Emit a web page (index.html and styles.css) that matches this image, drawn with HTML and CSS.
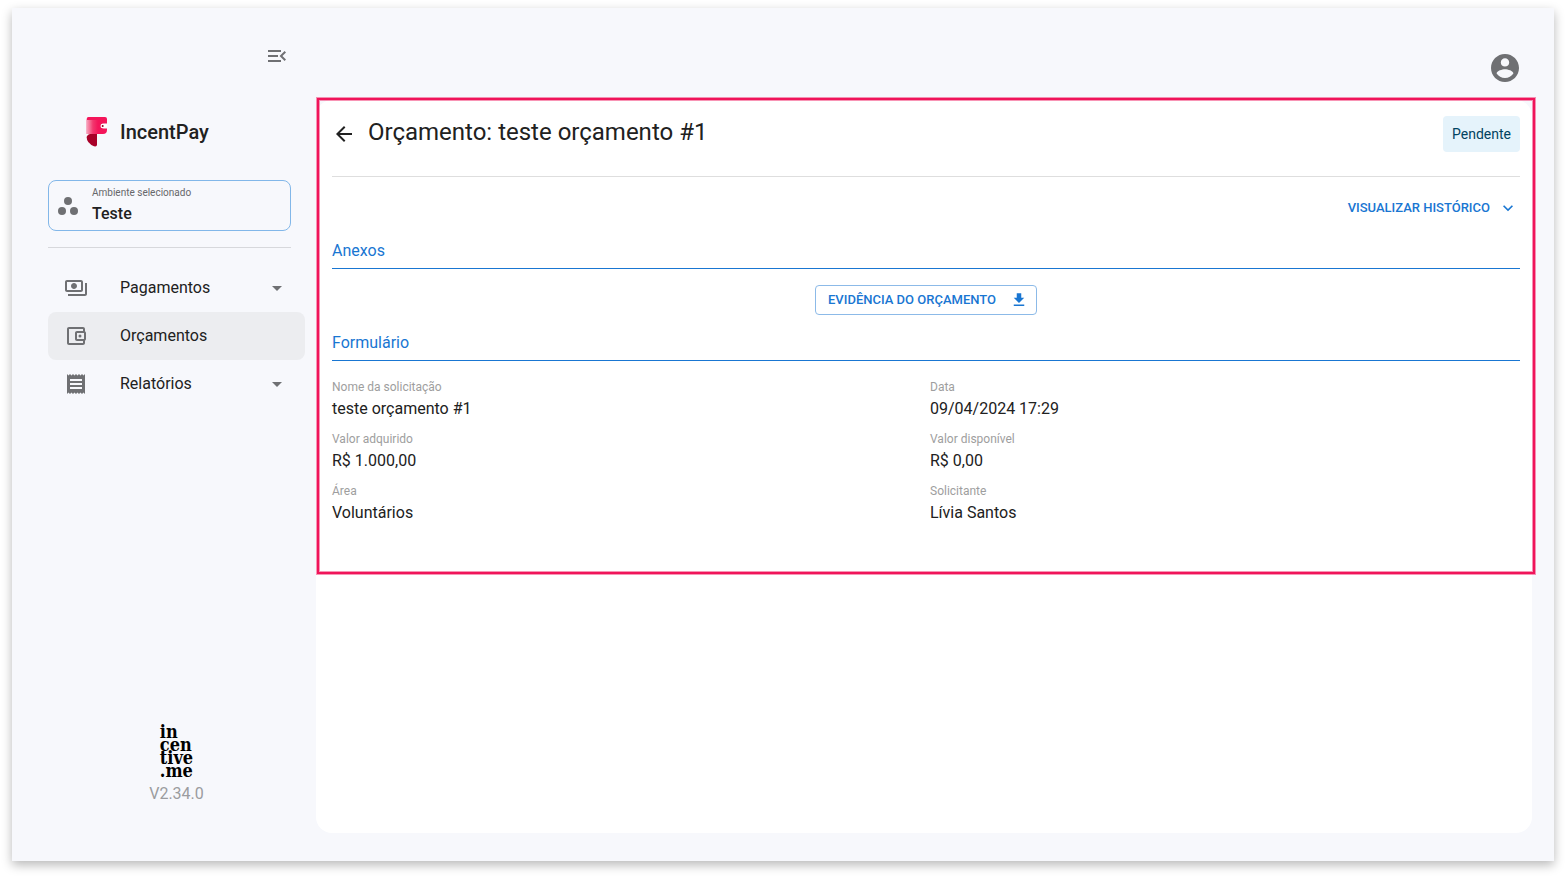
FILE: index.html
```html
<!DOCTYPE html>
<html lang="pt-BR">
<head>
<meta charset="utf-8">
<meta name="viewport" content="width=device-width, initial-scale=1">
<title>IncentPay - Orçamento</title>
<link rel="stylesheet" href="styles.css">
</head>
<body>
<div class="app">
  <aside class="sidebar">
    <button class="icon-button collapse" type="button" aria-label="Recolher menu">
      <svg class="icon" viewBox="0 0 24 24"><path d="M3 18h13v-2H3v2zm0-5h10v-2H3v2zm0-7v2h13V6H3zm18 9.590L17.420 12 21 8.410 19.590 7l-5 5 5 5L21 15.590z"/></svg>
    </button>
    <div class="brand">
      <svg class="brand-mark" viewBox="0 0 22 30">
        <defs>
          <linearGradient id="fold" x1="0" x2="1" y1="0" y2="0">
            <stop offset="0" stop-color="#f7a3bb"/>
            <stop offset="0.55" stop-color="#f2386e"/>
            <stop offset="1" stop-color="#f4155a"/>
          </linearGradient>
        </defs>
        <path fill="#f4155a" d="M2.500 0H19q2 0 2 2v4.500h-3.500a2.500 2.500 0 0 0 0 5H21V13q0 4-4 4H.7V2q0-2 1.800-2z"/>
        <path fill="url(#fold)" d="M.7 3H12v14H.7z"/>
        <path fill="#a80028" d="M4 17h7v10.500q0 2.500-3 1.800Q.7 26 .7 20.500.7 18 4 17z"/>
        <path fill="#fff" d="M21 7.500h-4v3h4z"/>
        <circle cx="16.700" cy="9" r="2.200" fill="#fff"/>
        <circle cx="16.700" cy="9" r="1" fill="#8c0020"/>
      </svg>
      <span class="brand-name">IncentPay</span>
    </div>
    <button class="environment" type="button">
      <svg class="icon" viewBox="0 0 24 24"><circle cx="6" cy="17" r="4"/><circle cx="12" cy="7" r="4"/><circle cx="18" cy="17" r="4"/></svg>
      <span class="environment-text">
        <span class="environment-label">Ambiente selecionado</span>
        <span class="environment-name">Teste</span>
      </span>
    </button>
    <hr class="divider">
    <nav class="nav">
      <button class="nav-item" type="button">
        <svg class="icon" viewBox="0 0 24 24"><path d="M19 14V6c0-1.100-.9-2-2-2H3c-1.100 0-2 .9-2 2v8c0 1.100.9 2 2 2h14c1.100 0 2-.9 2-2zm-2 0H3V6h14v8zm-7-7c-1.660 0-3 1.340-3 3s1.340 3 3 3 3-1.340 3-3-1.340-3-3-3zm13 0v11c0 1.100-.9 2-2 2H4v-2h17V7h2z"/></svg>
        <span class="nav-label">Pagamentos</span>
        <svg class="icon" viewBox="0 0 24 24"><path d="m7 10 5 5 5-5z"/></svg>
      </button>
      <a class="nav-item nav-item-active" href="#orcamentos" aria-current="page">
        <svg class="icon" viewBox="0 0 24 24"><path d="M21 7.280V5c0-1.100-.9-2-2-2H5c-1.110 0-2 .9-2 2v14c0 1.100.89 2 2 2h14c1.100 0 2-.9 2-2v-2.280c.59-.35 1-.98 1-1.720V9c0-.74-.41-1.370-1-1.720zM20 9v6h-7V9h7zM5 19V5h14v2h-6c-1.100 0-2 .9-2 2v6c0 1.100.9 2 2 2h6v2H5z"/><circle cx="16" cy="12" r="1.500"/></svg>
        <span class="nav-label">Orçamentos</span>
      </a>
      <button class="nav-item" type="button">
        <svg class="icon" viewBox="0 0 24 24"><path d="M18 17H6v-2h12v2zm0-4H6v-2h12v2zm0-4H6V7h12v2zM3 22l1.500-1.500L6 22l1.500-1.500L9 22l1.500-1.500L12 22l1.500-1.500L15 22l1.500-1.500L18 22l1.500-1.500L21 22V2l-1.500 1.500L18 2l-1.500 1.500L15 2l-1.500 1.500L12 2l-1.500 1.500L9 2 7.500 3.500 6 2 4.500 3.500 3 2v20z"/></svg>
        <span class="nav-label">Relatórios</span>
        <svg class="icon" viewBox="0 0 24 24"><path d="m7 10 5 5 5-5z"/></svg>
      </button>
    </nav>
    <footer class="sidebar-footer">
      <div class="company">in<br>cen<br>tive<br>.me</div>
      <div class="version">V2.34.0</div>
    </footer>
  </aside>

  <div class="content">
    <header class="topbar">
      <button class="icon-button" type="button" aria-label="Conta">
        <svg class="account-icon" viewBox="2 2 20 20"><path d="M12 2C6.480 2 2 6.480 2 12s4.480 10 10 10 10-4.480 10-10S17.520 2 12 2zm0 3c1.660 0 3 1.340 3 3s-1.340 3-3 3-3-1.340-3-3 1.340-3 3-3zm0 14.200c-2.500 0-4.710-1.280-6-3.220.03-1.990 4-3.080 6-3.080 1.990 0 5.970 1.090 6 3.080-1.290 1.940-3.500 3.220-6 3.220z"/></svg>
      </button>
    </header>
    <main class="panel">
      <section class="budget">
        <div class="budget-header">
          <button class="icon-button back" type="button" aria-label="Voltar">
            <svg class="icon" viewBox="0 0 24 24"><path d="M20 11H7.830l5.590-5.590L12 4l-8 8 8 8 1.410-1.410L7.830 13H20v-2z"/></svg>
          </button>
          <h1 class="title">Orçamento: teste orçamento #1</h1>
          <span class="status">Pendente</span>
        </div>
        <div class="history-row">
          <button class="text-button" type="button">VISUALIZAR HISTÓRICO
            <svg class="chevron" viewBox="0 0 24 24"><path d="M7.410 8.590 12 13.170l4.590-4.580L18 10l-6 6-6-6 1.410-1.410z"/></svg>
          </button>
        </div>
        <h2 class="section-title">Anexos</h2>
        <div class="attachments">
          <button class="outlined-button" type="button">EVIDÊNCIA DO ORÇAMENTO
            <svg class="download" viewBox="0 0 24 24"><path d="M19 9h-4V3H9v6H5l7 7 7-7zM5 18v2h14v-2H5z"/></svg>
          </button>
        </div>
        <h2 class="section-title">Formulário</h2>
        <dl class="fields">
          <div><dt>Nome da solicitação</dt><dd>teste orçamento #1</dd></div>
          <div><dt>Data</dt><dd>09/04/2024 17:29</dd></div>
          <div><dt>Valor adquirido</dt><dd>R$ 1.000,00</dd></div>
          <div><dt>Valor disponível</dt><dd>R$ 0,00</dd></div>
          <div><dt>Área</dt><dd>Voluntários</dd></div>
          <div><dt>Solicitante</dt><dd>Lívia Santos</dd></div>
        </dl>
      </section>
    </main>
  </div>
</div>
</body>
</html>
```
FILE: styles.css
```css
* {
  box-sizing: border-box;
}

body {
  margin: 0;
  padding: 8px 12px 16px;
  background: #fff;
  color: #212121;
  font-family: Roboto, "Liberation Sans", sans-serif;
  font-size: 16px;
  line-height: 24px;
}

button {
  margin: 0;
  padding: 0;
  border: 0;
  background: none;
  color: inherit;
  font: inherit;
  text-align: left;
  cursor: pointer;
}

svg {
  display: block;
  flex: none;
  fill: currentColor;
}

.app {
  display: flex;
  min-height: calc(100vh - 24px);
  background: #f7f8fc;
  box-shadow: 0 4px 10px rgba(0, 0, 0, 0.28);
}

.icon {
  width: 24px;
  height: 24px;
}

.icon-button {
  color: #6f7073;
}

/* Sidebar */
.sidebar {
  display: flex;
  flex-direction: column;
  flex: none;
  width: 304px;
  padding: 36px 11px 55px 36px;
}

.collapse {
  align-self: flex-end;
  margin-right: 16px;
}

.brand {
  display: flex;
  align-items: center;
  gap: 12px;
  margin: 49px 0 33px 38px;
}

.brand-mark {
  width: 22px;
  height: 30px;
}

.brand-name {
  font-size: 20px;
  font-weight: 500;
}

.environment {
  display: flex;
  align-items: center;
  gap: 12px;
  margin-right: 14px;
  padding: 3px 7px;
  border: 1px solid #82b7e9;
  border-radius: 8px;
}

.environment .icon {
  color: #6f7073;
}

.environment-text {
  display: flex;
  flex-direction: column;
  padding-bottom: 1px;
}

.environment-label {
  color: #66676a;
  font-size: 10px;
  line-height: 18px;
}

.environment-name {
  font-weight: 500;
}

.divider {
  width: calc(100% - 14px);
  margin: 16px 0;
  border: 0;
  border-top: 1px solid #d7d8dc;
}

.nav-item {
  display: flex;
  align-items: center;
  gap: 32px;
  width: 100%;
  height: 48px;
  padding: 0 16px;
  border-radius: 8px;
  color: #212121;
  text-decoration: none;
}

.nav-item .icon {
  color: #6f7073;
}

.nav-item-active {
  background: #ecedf0;
}

.nav-label {
  flex: 1;
}

.sidebar-footer {
  display: flex;
  flex-direction: column;
  align-items: center;
  gap: 5px;
  margin-top: auto;
}

.company {
  color: #000;
  font: bold 18px/13px "DejaVu Serif Condensed", "DejaVu Serif", serif;
}

.version {
  color: #9b9c9f;
}

/* Content */
.content {
  display: flex;
  flex: 1;
  flex-direction: column;
  min-width: 0;
  padding: 0 22px 28px 0;
}

.topbar {
  display: flex;
  justify-content: flex-end;
  padding: 46px 13px 18px;
}

.account-icon {
  width: 28px;
  height: 28px;
}

.panel {
  flex: 1;
  border-radius: 16px;
  background: #fff;
}

.budget {
  position: relative;
  padding: 16px 12px 49px 16px;
}

.budget::after {
  position: absolute;
  inset: -2px -3px 0 1px;
  border: 2px solid #f0145a;
  box-shadow: 0 0 0 1px rgba(240, 20, 90, 0.45), inset 0 0 0 1px rgba(240, 20, 90, 0.45);
  content: "";
  pointer-events: none;
}

.budget-header {
  display: flex;
  align-items: center;
  gap: 12px;
  padding-bottom: 24px;
  border-bottom: 1px solid #dedede;
}

.back {
  color: #212121;
}

.title {
  flex: 1;
  margin: 0;
  padding-bottom: 4px;
  font-size: 24px;
  font-weight: 400;
  line-height: 32px;
}

.status {
  padding: 6px 9px;
  border-radius: 4px;
  background: #e5f3fb;
  color: #014361;
  font-size: 14px;
}

.history-row {
  display: flex;
  justify-content: flex-end;
  padding: 16px 2px;
}

.text-button,
.outlined-button {
  display: flex;
  align-items: center;
  color: #1976d2;
  font-size: 13px;
  font-weight: 500;
  line-height: 22px;
}

.text-button {
  gap: 8px;
  padding: 4px 0;
}

.chevron {
  width: 20px;
  height: 20px;
}

.outlined-button {
  gap: 14px;
  padding: 3px 8px 3px 12px;
  border: 1px solid #8cbae8;
  border-radius: 4px;
}

.download {
  width: 18px;
  height: 18px;
}

.section-title {
  margin: 0;
  padding-bottom: 5px;
  border-bottom: 1px solid #1976d2;
  color: #1976d2;
  font-size: 16px;
  font-weight: 400;
}

.attachments {
  display: flex;
  justify-content: center;
  padding: 16px 0;
}

.fields {
  display: grid;
  grid-template-columns: 1fr 1fr;
  gap: 8px;
  margin: 16px 0 0;
}

.fields dt {
  color: #9e9e9e;
  font-size: 12px;
  line-height: 20px;
}

.fields dd {
  margin: 0;
}
```
